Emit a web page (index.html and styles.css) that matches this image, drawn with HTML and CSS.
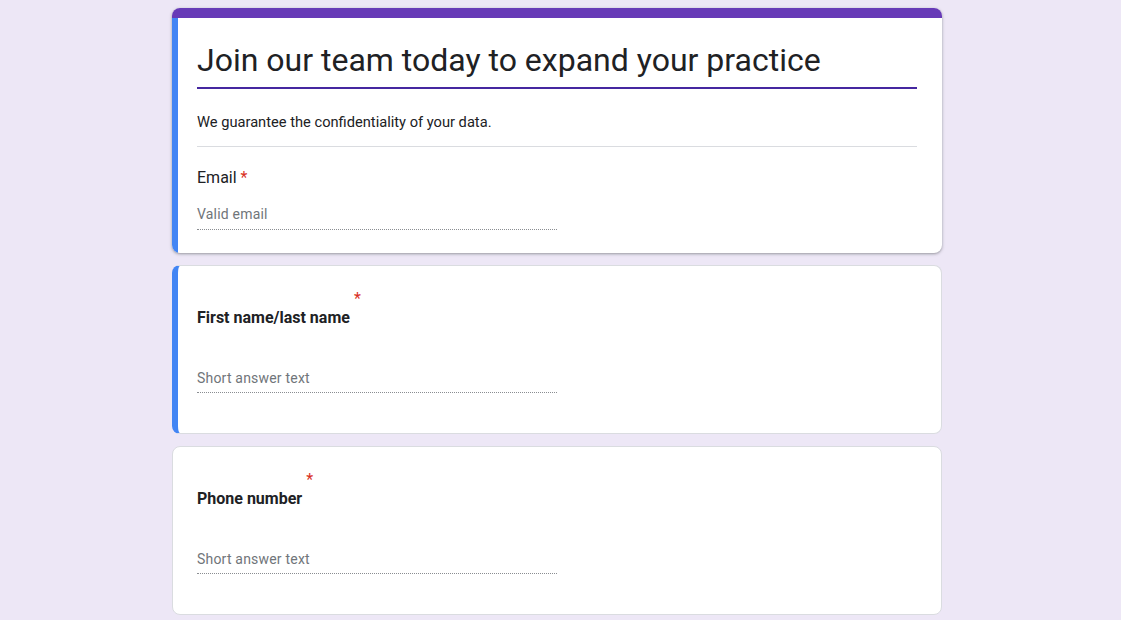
FILE: index.html
```html
<!DOCTYPE html>
<html lang="en">
<head>
  <meta charset="UTF-8">
  <meta name="viewport" content="width=device-width, initial-scale=1.0">
  <title>Join our team today to expand your practice</title>
  <link rel="stylesheet" href="styles.css">
</head>
<body>
  <div class="form-wrap">

    <div class="card header-card">
      <div class="card-accent"></div>
      <div class="card-body">
        <h1 class="form-title">Join our team today to expand your practice</h1>
        <p class="form-desc">We guarantee the confidentiality of your data.</p>

        <div class="question">
          <div class="question-label">Email <span class="required">*</span></div>
          <div class="answer">Valid email</div>
        </div>
      </div>
    </div>

    <div class="card question-card active">
      <div class="question-title">
        <span class="title-text">First name/last name</span>
        <span class="required">*</span>
      </div>
      <div class="answer answer-spaced">Short answer text</div>
    </div>

    <div class="card question-card">
      <div class="question-title">
        <span class="title-text">Phone number</span>
        <span class="required">*</span>
      </div>
      <div class="answer answer-spaced">Short answer text</div>
    </div>

  </div>
</body>
</html>
```

FILE: styles.css
```css
body {
  margin: 0;
  padding: 8px 7px 0 0;
  background-color: #ede7f6;
  font-family: Roboto, 'Noto Sans', Arial, sans-serif;
  color: #202124;
}
.form-wrap {
  width: 770px;
  margin: 0 auto;
}
.card {
  background-color: #fff;
  border-radius: 8px;
  margin-bottom: 12px;
}
.header-card {
  overflow: hidden;
  box-shadow: 0 1px 2px rgba(60, 64, 67, 0.3), 0 1px 3px 1px rgba(60, 64, 67, 0.15);
}
.card-accent {
  height: 10px;
  background-color: #673ab7;
}
.card-body {
  border-left: 6px solid #4285f4;
  padding: 22px 25px 23px 19px;
}
.form-title {
  margin: 0;
  font-size: 32px;
  line-height: 40px;
  font-weight: 400;
  padding-bottom: 7px;
  border-bottom: 2px solid #4527a0;
}
.form-desc {
  margin: 23px 0 0;
  font-size: 14.67px;
  line-height: 20px;
  padding-bottom: 14px;
  border-bottom: 1px solid #dadce0;
}
.question {
  margin-top: 19px;
}
.question-label {
  font-size: 16px;
  line-height: 24px;
}
.required {
  color: #d93025;
}
.answer {
  width: 360px;
  margin-top: 14px;
  font-size: 14px;
  line-height: 20px;
  letter-spacing: 0.2px;
  color: #70757a;
  padding-bottom: 5px;
  border-bottom: 1px dotted #8a8d91;
}
.question-card {
  border: 1px solid #dadce0;
  padding: 24px 24px 40px 24px;
}
.question-card.active {
  border-left: 6px solid #4285f4;
  padding-left: 19px;
}
.question-title {
  display: flex;
  align-items: flex-start;
  font-size: 16px;
  line-height: 24px;
}
.title-text {
  margin-top: 16px;
  font-weight: 700;
}
.question-title .required {
  margin-left: 4px;
  line-height: 18px;
}
.answer-spaced {
  margin-top: 38px;
  padding-bottom: 4px;
}
```
